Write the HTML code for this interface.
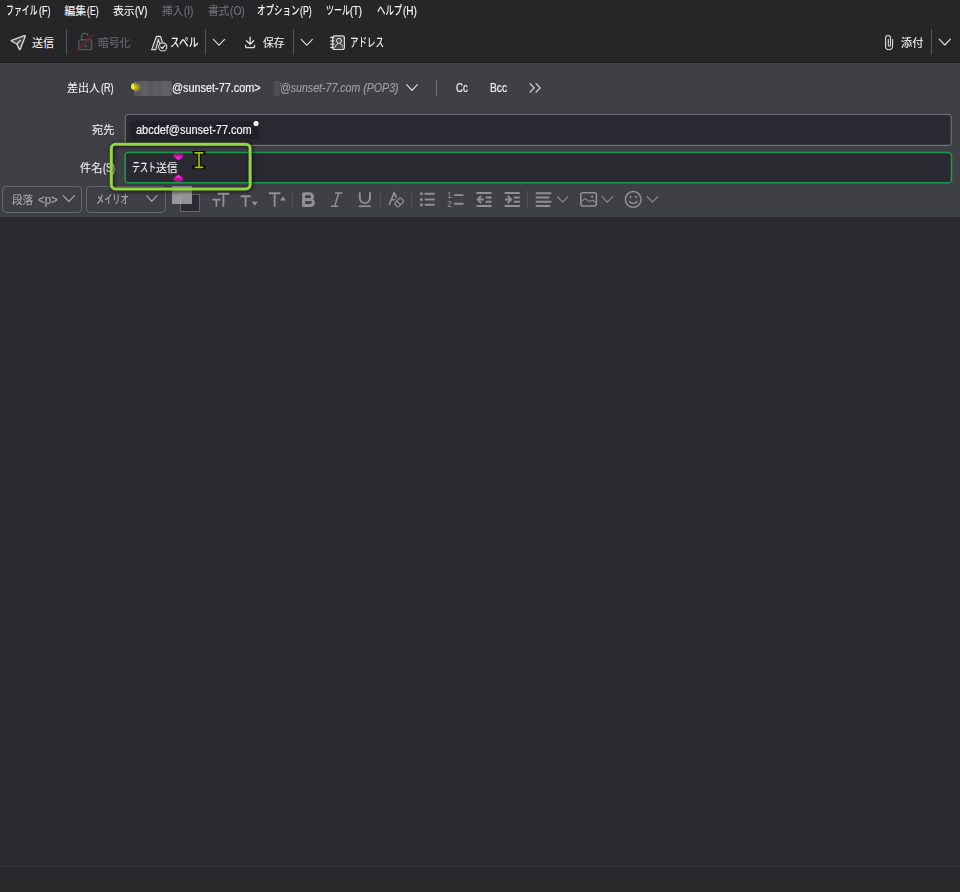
<!DOCTYPE html>
<html lang="ja">
<head>
<meta charset="utf-8">
<title>作成: テスト送信</title>
<style>
*{box-sizing:border-box;margin:0;padding:0}
html,body{width:960px;height:892px;overflow:hidden;background:#2a2a2e}
body{font-family:"Liberation Sans","Noto Sans CJK JP",sans-serif;font-size:12px;color:#f4f4f5;position:relative}
.abs{position:absolute}
.t{-webkit-text-stroke:0.18px currentColor;position:absolute;display:inline-block;white-space:nowrap;transform-origin:0 50%;line-height:16px;height:16px}
svg{position:absolute;overflow:visible}
#menubar{left:0;top:0;width:960px;height:22px;background:#262629}
#menubar .t{top:3px;font-size:12px;color:#f7f7f8}
.t.j{font-size:11px !important;-webkit-text-stroke:0.08px currentColor}
.t.k{font-size:12px !important;-webkit-text-stroke:0}
#menubar .t.dis{color:#707077}
#toolbar{left:0;top:22px;width:960px;height:40px;background:#262629}
#tbborder{left:0;top:62px;width:960px;height:1px;background:#1b1b1e}
#toolbar .t{top:13px;font-size:12px;color:#f4f4f5}
.tbsep{position:absolute;top:7px;width:1px;height:26px;background:#55555b}
#headers{left:0;top:63px;width:960px;height:154px;background:#3f3f46}
.fsep{position:absolute;top:127px;width:1px;height:19px;background:#505057}
.dd{position:absolute;top:123px;height:27px;border:1px solid #66666d;border-radius:4px}
#editor{left:0;top:217px;width:960px;height:649px;background:#2a2a2e}
#statusline{left:0;top:866px;width:960px;height:1px;background:#38383d}
#status{left:0;top:867px;width:960px;height:25px;background:#28282b}
</style>
</head>
<body>
<div id="menubar" class="abs">
<span class="t k" style="left:6.34px;font-weight:500;transform:scaleX(0.6596)">ファイル</span><span class="t" style="left:38.7px;transform:scaleX(0.7533)">(F)</span>
<span class="t j" style="left:64.2px;transform:scaleX(1.0)">編集</span><span class="t" style="left:87.0px;transform:scaleX(0.7313)">(E)</span>
<span class="t j" style="left:112.5px;transform:scaleX(0.9864)">表示</span><span class="t" style="left:135.0px;transform:scaleX(0.7812)">(V)</span>
<span class="t j dis" style="left:162.0px;transform:scaleX(0.9682)">挿入</span><span class="t dis" style="left:184.2px;transform:scaleX(0.8273)">(I)</span>
<span class="t j dis" style="left:207.5px;transform:scaleX(0.9636)">書式</span><span class="t dis" style="left:229.7px;transform:scaleX(0.8529)">(O)</span>
<span class="t k" style="left:256.79px;font-weight:500;transform:scaleX(0.7068)">オプション</span><span class="t" style="left:300.0px;transform:scaleX(0.7312)">(P)</span>
<span class="t k" style="left:325.8px;font-weight:500;transform:scaleX(0.6639)">ツール</span><span class="t" style="left:350.3px;transform:scaleX(0.78)">(T)</span>
<span class="t k" style="left:376.7px;font-weight:500;transform:scaleX(0.7028)">ヘルプ</span><span class="t" style="left:403.0px;transform:scaleX(0.8353)">(H)</span>
</div>
<div id="toolbar" class="abs">
<span class="t j" style="left:32.0px;transform:scaleX(1.0)">送信</span>
<div class="tbsep" style="left:66px"></div>
<span class="t j" style="left:98.3px;color:#6c6c73;transform:scaleX(0.9848)">暗号化</span>
<span class="t k" style="left:169.99px;font-weight:500;transform:scaleX(0.8091)">スペル</span>
<div class="tbsep" style="left:205px"></div>
<span class="t j" style="left:263.3px;transform:scaleX(0.9864)">保存</span>
<div class="tbsep" style="left:293px"></div>
<span class="t k" style="left:350.09px;font-weight:500;transform:scaleX(0.7065)">アドレス</span>
<span class="t j" style="left:900.9px;transform:scaleX(1.0227)">添付</span>
<div class="tbsep" style="left:931px"></div>
</div>
<div id="tbborder" class="abs"></div>
<div id="headers" class="abs">
<span class="t j" style="left:67.1px;top:17px;transform:scaleX(1.0045)">差出人</span><span class="t" style="left:100.9px;top:17px;transform:scaleX(0.7529)">(R)</span>
<span class="t" style="left:172.0px;top:17px;transform:scaleX(0.9061)">@sunset-77.com&gt;</span>
<span class="t" style="left:277.6px;top:17px;font-style:italic;color:#9e9ea5;transform:scaleX(0.72)">f</span><span class="t" style="left:279.92px;top:17px;font-style:italic;color:#9e9ea5;transform:scaleX(0.8835)">@sunset-77.com (POP3)</span>
<div class="abs" style="left:436px;top:17px;width:1px;height:16px;background:#6c6c73"></div>
<span class="t" style="left:455.5px;top:17px;transform:scaleX(0.8)">Cc</span>
<span class="t" style="left:490.0px;top:17px;transform:scaleX(0.85)">Bcc</span>
<span class="t j" style="left:91.5px;top:59px;transform:scaleX(1.0227)">宛先</span>
<span class="t j" style="left:79.9px;top:97px;transform:scaleX(1.0143)">件名</span><span class="t" style="left:102.7px;top:97px;transform:scaleX(0.7562)">(S)</span>
<svg width="960" height="154" viewBox="0 63 960 154" style="left:0;top:0">
<rect x="125.3" y="114.5" width="826" height="30.9" rx="3.2" fill="#2a2932" stroke="#6e6e77" stroke-width="1.2"/>
<rect x="130" y="121.3" width="129" height="17.8" rx="3" fill="#222128"/>
<circle cx="256" cy="123.5" r="2.6" fill="#fdfdfd"/>
<rect x="125.1" y="152.5" width="826.4" height="30.3" rx="3.4" fill="#2a2932" stroke="#1a9a48" stroke-width="1.6"/>
</svg>
<span class="t" style="left:135.7px;top:59px;transform:scaleX(0.9118)">abcdef@sunset-77.com</span>
<span class="t k" style="left:131.6px;top:97px;font-weight:500;transform:scaleX(0.6686)">テスト</span><span class="t j" style="left:156.0px;top:97px;transform:scaleX(0.9818)">送信</span>
<div class="abs" style="left:130.8px;top:20.4px;width:7px;height:7px;border-radius:50%;background:#f4f200"></div>
<div class="abs ov" style="left:134px;top:18px;width:38px;height:15px;overflow:hidden;background:radial-gradient(ellipse 8px 5.5px at 0px 6.2px,rgba(236,234,0,0.95) 0,rgba(200,198,20,0.55) 55%,rgba(120,120,60,0) 100%),linear-gradient(90deg,#55555b 0,#58585e 18%,#616167 30%,#56565c 42%,#5e5e64 55%,#5a5a60 68%,#636369 82%,#5b5b61 100%)"></div>
<div class="abs ov" style="left:272.5px;top:18px;width:7.3px;height:15px;background:linear-gradient(90deg,#45454c,#505057 55%,#494950)"></div>
<div class="abs" style="left:180px;top:131px;width:20px;height:18px;background:#2b2a33;border:1px solid #64646a"></div>
<div class="abs" style="left:172px;top:123px;width:20px;height:18px;background:rgba(176,175,182,0.78)"></div>
<div class="dd" style="left:2px;width:80px"></div>
<span class="t j" style="left:11.9px;top:129px;color:#a9a9af;transform:scaleX(0.9636)">段落</span><span class="t" style="left:38.1px;top:129px;color:#a9a9af;transform:scaleX(0.9524)">&lt;p&gt;</span>
<div class="dd" style="left:86px;width:80px"></div>
<span class="t k" style="left:95.62px;top:129px;color:#a9a9af;font-weight:500;transform:scaleX(0.6783)">メイリオ</span>
<div class="fsep" style="left:292px"></div>
<div class="fsep" style="left:380px"></div>
<div class="fsep" style="left:411px"></div>
<div class="fsep" style="left:527px"></div>
</div>
<div id="editor" class="abs"></div>
<svg id="icons" width="960" height="892" viewBox="0 0 960 892" style="left:0;top:0" fill="none" stroke-linecap="round" stroke-linejoin="round">
<!-- toolbar icons -->
<g stroke="#dededf" stroke-width="1.15">
<path d="M25.14 36.42 Q25.60 35.20 24.38 35.65 L11.73 40.29 Q10.60 40.70 11.66 41.26 L16.80 44.00 L19.36 49.13 Q19.90 50.20 20.33 49.08 Z" fill="#47474c" stroke-width="1.25"/>
<path d="M16.9 43.9 L20.3 40.5" stroke-width="1.25"/>
<path d="M162.3 41.6 L160.3 36.3 H156.5 L151.7 49.6 H155.8 L158.3 39.4 L159.6 43.4" fill="#3e3e42"/>
<circle cx="162.7" cy="46.9" r="4.1" fill="#262629"/>
<path d="M160.7 46.9 L162.2 48.5 L164.9 45.4"/>
<path d="M213.4 39.3 L219 45.1 L224.6 39.3"/>
<path d="M250.1 37.2 V44.2 M246.5 40.7 L250.1 44.3 L253.7 40.7" stroke-width="1.3"/>
<path d="M245.6 45.3 V46.4 Q245.6 47.6 246.8 47.6 H253.3 Q254.5 47.6 254.5 46.4 V45.3" stroke-width="1.3"/>
<path d="M301.2 39.3 L306.8 45.1 L312.4 39.3"/>
<rect x="332.7" y="35.9" width="11.7" height="13.6" rx="2" fill="#47474c"/>
<path d="M330.8 37.5 H333.6 M330.8 40.8 H333.6 M330.8 44.2 H333.6 M330.8 47.5 H333.6" stroke-width="1.3"/>
<circle cx="339" cy="40.8" r="2.5" stroke-width="1"/>
<path d="M335.5 47 V46.3 C335.5 44.7 336.8 44.6 337.7 44.1 Q338.1 43.7 337.7 43.1 M342.5 47 V46.3 C342.5 44.7 341.2 44.6 340.3 44.1 Q339.9 43.7 340.3 43.1" stroke-width="1"/>
<path d="M892.6 39.6 V46.2 A3.5 3.5 0 0 1 885.6 46.2 V37.9 A2.45 2.45 0 0 1 890.5 37.9 V45 A1.1 1.1 0 0 1 888.3 45 V39.3" stroke-width="1.1"/>
<path d="M939.2 39.2 L944.8 45 L950.4 39.2"/>
</g>
<g stroke="#5e5e63" stroke-width="1.1">
<rect x="78.8" y="39.8" width="13" height="10" rx="2" fill="#303033"/>
<path d="M81.6 39.6 V36.8 A3.3 3.3 0 0 1 88 35.6"/>
<path d="M85.5 45.5 V46.5" stroke-width="1.6"/>
</g>
<path d="M77.8 49.5 L92.8 35.2" stroke="#7c1b32" stroke-width="1.4"/>
<!-- annotation overlay -->
<rect x="111.3" y="144.3" width="138.8" height="44.7" rx="4.2" stroke="#92d640" stroke-width="3" style="filter:drop-shadow(1.4px 1.4px 2.2px rgba(0,0,0,0.8))"/>
<defs>
<linearGradient id="mg1" x1="0" y1="0" x2="0" y2="1"><stop offset="0" stop-color="#9c1488"/><stop offset="0.45" stop-color="#b514a0"/><stop offset="0.55" stop-color="#ff1fd6"/><stop offset="1" stop-color="#ff1fd6"/></linearGradient>
<linearGradient id="mg2" x1="0" y1="1" x2="0" y2="0"><stop offset="0" stop-color="#9c1488"/><stop offset="0.45" stop-color="#b514a0"/><stop offset="0.55" stop-color="#ff1fd6"/><stop offset="1" stop-color="#ff1fd6"/></linearGradient>
</defs>
<path d="M173.4 155.6 Q173.6 153 178.4 153 Q183.2 153 183.4 155.6 Q183 157.2 178.4 160.2 Q173.8 157.2 173.4 155.6 Z" fill="url(#mg1)"/>
<path d="M173.4 179.2 Q173.6 181.9 178.4 181.9 Q183.2 181.9 183.4 179.2 Q183 177.6 178.4 174.5 Q173.8 177.6 173.4 179.2 Z" fill="url(#mg2)"/>
<g stroke-linecap="butt" stroke-linejoin="miter">
<path d="M194.4 152.8 H203.6 M194.4 167.4 H203.6 M199 152.8 V167.4" stroke="#050505" stroke-width="3.6" stroke-linecap="square"/>
<path d="M194.6 152.8 H203.4 M194.6 167.4 H203.4 M199 152.8 V167.4" stroke="#9cc400" stroke-width="1.7"/>
</g>
<!-- header icons -->
<g stroke="#e4e4e7" stroke-width="1.15">
<path d="M406.6 84.6 L412 90.3 L417.4 84.6"/>
<path d="M530 83.6 L534.2 87.9 L530 92.2 M536 83.6 L540.2 87.9 L536 92.2" stroke-width="1.1"/>
</g>
<!-- format toolbar icons -->
<g stroke="#a9a9af" stroke-width="1.1">
<path d="M63.2 195.6 L68.8 201.6 L74.4 195.6"/>
<path d="M146.6 195.6 L151.8 201.4 L157 195.6"/>
</g>
<g stroke="#8f8f95" stroke-width="1.1">
<path d="M557.3 196.7 L562.6 202.2 L567.9 196.7"/>
<path d="M602.1 196.7 L607.4 202.2 L612.7 196.7"/>
<path d="M647.1 196.7 L652.4 202.2 L657.7 196.7"/>
</g>
<g stroke="#8f8f95" stroke-width="2" stroke-linecap="butt" stroke-linejoin="miter">
<!-- TT -->
<path d="M217.6 193.8 H229.2 M223.4 193.8 V206.7" stroke-width="1.9"/>
<path d="M212.4 199.6 H220.4 M216.4 199.6 V206.7" stroke-width="1.7"/>
<!-- T down -->
<path d="M240.6 196.2 H250.6 M245.6 196.2 V206.7" stroke-width="1.9"/>
<path d="M251.6 201.8 H257.9 L254.75 205.8 Z" fill="#8f8f95" stroke="none"/>
<!-- T up -->
<path d="M268.8 193.2 H280.4 M274.6 193.2 V206.7" stroke-width="1.9"/>
<path d="M280 200.6 H286 L283 196.4 Z" fill="#8f8f95" stroke="none"/>
<!-- B -->
<path d="M303.6 193.8 V205.5 M303.6 193.8 H309.6 A2.9 2.9 0 0 1 309.6 199.6 H303.6 M309.6 199.6 H310.4 A2.95 2.95 0 0 1 310.4 205.5 H303.6" stroke-width="3" stroke-linejoin="round" stroke-linecap="round"/>
<!-- I -->
<path d="M335.6 192.9 H341.8 M331.6 206.3 H337.8 M338.8 192.9 L334.6 206.3" stroke-width="1.5" stroke-linecap="round"/>
<!-- U -->
<path d="M359.8 192.3 V198 A5.1 5.1 0 0 0 370 198 V192.3" stroke-width="1.9"/>
<path d="M358.8 206.2 H371" stroke-width="1.7"/>
<!-- eraser A -->
<path d="M389.4 204.5 L394.1 192.6 L396.4 197.4 M392 199.7 H394.8" stroke-width="1.6" stroke-linecap="round" stroke-linejoin="round"/>
<g transform="translate(399.2 202.4) rotate(-46)" stroke-width="1.25"><rect x="-4.3" y="-2.65" width="8.6" height="5.3" rx="1.3"/><path d="M-0.7 -2.65 V2.65"/></g>
<!-- bullets -->
<path d="M425.4 193.8 H434 M425.4 199.5 H434 M425.4 204.8 H434" stroke-linecap="round" stroke-width="1.9"/>
<g fill="#8f8f95" stroke="none"><circle cx="421.4" cy="193.8" r="1.5"/><circle cx="421.4" cy="199.5" r="1.5"/><circle cx="421.4" cy="204.8" r="1.5"/></g>
<!-- numbered -->
<path d="M454.8 195.1 H462.8 M454.8 203.8 H462.8" stroke-linecap="round" stroke-width="1.9"/>
<!-- outdent -->
<path d="M476.4 193 H491.6 M476.4 206 H491.6 M485.6 197.4 H491.6 M485.6 201.7 H491.6" stroke-width="2"/>
<path d="M478 199.5 H483.8 M481.2 195.8 L477.6 199.5 L481.2 203.2" stroke-width="1.9" stroke-linejoin="miter"/>
<!-- indent -->
<path d="M504.6 193 H519.8 M504.6 206 H519.8 M513.8 197.4 H519.8 M513.8 201.7 H519.8" stroke-width="2"/>
<path d="M505 199.5 H510.8 M507.6 195.8 L511.2 199.5 L507.6 203.2" stroke-width="1.9" stroke-linejoin="miter"/>
<!-- align -->
<path d="M536.6 193.3 H550.6 M536.6 197.5 H548.6 M536.6 201.8 H550.6 M536.6 206 H549.4" stroke-linecap="round" stroke-width="2"/>
<!-- image -->
<rect x="580.8" y="192.8" width="15.6" height="13.2" rx="2.2" stroke-width="1.6"/>
<path d="M581.4 201.4 L585.2 198.6 L589.6 201.6 L592.2 200.2 L595.8 202.4" stroke-width="1.1" stroke-linejoin="round"/>
<circle cx="592" cy="196.6" r="1.2" fill="#8f8f95" stroke="none"/>
<!-- smiley -->
<circle cx="633.2" cy="199.4" r="7.8" stroke-width="1.5"/>
<path d="M629.4 201.6 Q633.2 205.6 637 201.6" stroke-width="1.5" stroke-linecap="round"/>
<g fill="#8f8f95" stroke="none"><circle cx="630.4" cy="197" r="1.1"/><circle cx="636" cy="197" r="1.1"/></g>
</g>
<text transform="translate(447.1 198) scale(0.1)" style="font-family:'Liberation Sans',sans-serif;font-size:84px" fill="#8f8f95" stroke="none">1</text>
<text transform="translate(447.3 207) scale(0.1)" style="font-family:'Liberation Sans',sans-serif;font-size:84px" fill="#8f8f95" stroke="none">2</text>

</svg>

<div id="statusline" class="abs"></div>
<div id="status" class="abs"></div>
</body>
</html>
